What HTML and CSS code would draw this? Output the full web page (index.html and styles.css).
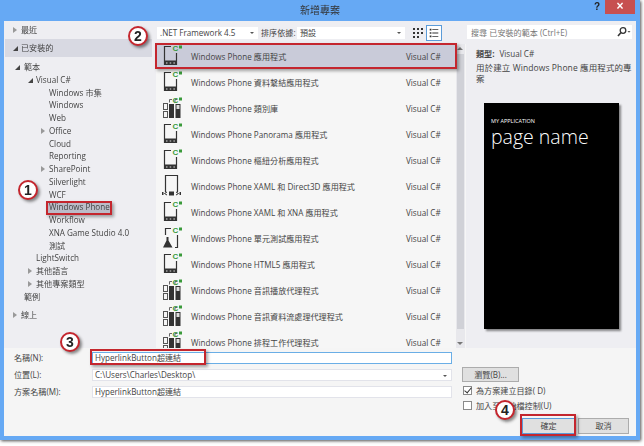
FILE: index.html
```html
<!DOCTYPE html>
<html lang="zh-Hant">
<head>
  <meta charset="UTF-8">
  <title>新增專案</title>
  <link rel="stylesheet" href="styles.css">
</head>
<body>
<svg class="defs" width="0" height="0">
  <symbol id="csharp" viewBox="0 0 22 24">
    <text x="10.500" y="7" class="cs">C</text>
    <rect x="17" y="1.500" width="3" height="3" fill="#3a9a3a"/>
  </symbol>
  <symbol id="phone" viewBox="0 0 22 24">
    <path d="M9 2.500H2.500V20.500H14.500V9" fill="none" stroke="#333" stroke-width="1.200"/>
    <rect x="2" y="16.500" width="13" height="4.500" fill="#333"/>
    <path d="M4 19h1.500M7.700 19h1.500M11.400 19h1.500" stroke="#ddd" stroke-width="1.200"/>
    <use href="#csharp"/>
  </symbol>
  <symbol id="lib" viewBox="0 0 22 24">
    <rect x="1.500" y="7.500" width="4" height="6" fill="none" stroke="#555"/>
    <rect x="1.500" y="15.500" width="4" height="6" fill="none" stroke="#555"/>
    <path d="M7.500 6.500V3.500H10M13 6.500V3.500H15" fill="none" stroke="#666"/>
    <rect x="7" y="8" width="5" height="14" fill="#333"/>
    <rect x="13.500" y="8" width="5" height="14" fill="#333"/>
    <rect x="14.500" y="9" width="3" height="4" fill="#ddd"/>
    <use href="#csharp"/>
  </symbol>
  <symbol id="d3d" viewBox="0 0 22 24">
    <path d="M3.500 18V1.500H15.500V18" fill="none" stroke="#333" stroke-width="1.200"/>
    <rect x="7" y="17.500" width="5" height="4" fill="#333"/>
    <path d="M5 18l-2.500 1.500L5 21M14 18l2.500 1.500L14 21" fill="none" stroke="#333"/>
    <rect x="0" y="18" width="1.500" height="3" fill="#333"/>
    <rect x="17.500" y="18" width="1.500" height="3" fill="#333"/>
  </symbol>
  <symbol id="test" viewBox="0 0 22 24">
    <path d="M9 2.500H3.500V9M15.500 9V21.500H13" fill="none" stroke="#333" stroke-width="1.200"/>
    <path d="M4.500 11h2v3.500l4 7H1l3.500-7z" fill="#333"/>
    <use href="#csharp"/>
  </symbol>
</svg>

<div class="window">
  <div class="titlebar">
    <span class="title">新增專案</span>
    <span class="help">?</span>
    <span class="close">×</span>
  </div>

  <div class="client">
    <div class="main">
      <div class="sidebar">
        <div class="head"><i class="arrow open-no"></i>最近</div>
        <div class="head selected"><i class="arrow filled"></i>已安裝的</div>
        <ul class="tree">
          <li class="lv1"><i class="arrow filled"></i>範本</li>
          <li class="lv2"><i class="arrow filled"></i>Visual C#</li>
          <li class="lv3">Windows 市集</li>
          <li class="lv3">Windows</li>
          <li class="lv3">Web</li>
          <li class="lv3"><i class="arrow open-no"></i>Office</li>
          <li class="lv3">Cloud</li>
          <li class="lv3">Reporting</li>
          <li class="lv3"><i class="arrow open-no"></i>SharePoint</li>
          <li class="lv3">Silverlight</li>
          <li class="lv3">WCF</li>
          <li class="lv3 picked">Windows Phone</li>
          <li class="lv3">Workflow</li>
          <li class="lv3">XNA Game Studio 4.0</li>
          <li class="lv3">測試</li>
          <li class="lv2">LightSwitch</li>
          <li class="lv2"><i class="arrow open-no"></i>其他語言</li>
          <li class="lv2"><i class="arrow open-no"></i>其他專案類型</li>
          <li class="lv1">範例</li>
        </ul>
        <div class="head online"><i class="arrow open-no"></i>線上</div>
      </div>

      <div class="center">
        <div class="toolbar">
          <div class="select fw">.NET Framework 4.5<b></b></div>
          <span class="sort-label">排序依據:</span>
          <div class="select sort">預設<b></b></div>
          <svg class="view" width="14" height="14" viewBox="0 0 14 14">
            <path d="M2 2h2v2H2zM6 2h2v2H6zM10 2h2v2h-2zM2 6h2v2H2zM6 6h2v2H6zM10 6h2v2h-2zM2 10h2v2H2zM6 10h2v2H6z" fill="#333"/>
          </svg>
          <svg class="view current" width="14" height="14" viewBox="0 0 14 14">
            <path d="M2 2h2v2H2zM5 2.500h7v1H5zM2 6h2v2H2zM5 6.500h7v1H5zM2 10h2v2H2zM5 10.500h7v1H5z" fill="#333"/>
          </svg>
        </div>
        <div class="list-wrap">
          <ul class="list">
            <li class="active"><svg class="icon"><use href="#phone"/></svg><span>Windows Phone 應用程式</span><em>Visual C#</em></li>
            <li><svg class="icon"><use href="#phone"/></svg><span>Windows Phone 資料繫結應用程式</span><em>Visual C#</em></li>
            <li><svg class="icon"><use href="#lib"/></svg><span>Windows Phone 類別庫</span><em>Visual C#</em></li>
            <li><svg class="icon"><use href="#phone"/></svg><span>Windows Phone Panorama 應用程式</span><em>Visual C#</em></li>
            <li><svg class="icon"><use href="#phone"/></svg><span>Windows Phone 樞紐分析應用程式</span><em>Visual C#</em></li>
            <li><svg class="icon"><use href="#d3d"/></svg><span>Windows Phone XAML 和 Direct3D 應用程式</span><em>Visual C#</em></li>
            <li><svg class="icon"><use href="#phone"/></svg><span>Windows Phone XAML 和 XNA 應用程式</span><em>Visual C#</em></li>
            <li><svg class="icon"><use href="#test"/></svg><span>Windows Phone 單元測試應用程式</span><em>Visual C#</em></li>
            <li><svg class="icon"><use href="#phone"/></svg><span>Windows Phone HTML5 應用程式</span><em>Visual C#</em></li>
            <li><svg class="icon"><use href="#lib"/></svg><span>Windows Phone 音訊播放代理程式</span><em>Visual C#</em></li>
            <li><svg class="icon"><use href="#lib"/></svg><span>Windows Phone 音訊資料流處理代理程式</span><em>Visual C#</em></li>
            <li><svg class="icon"><use href="#lib"/></svg><span>Windows Phone 排程工作代理程式</span><em>Visual C#</em></li>
          </ul>
          <div class="scrollbar">
            <i class="up"></i>
            <div class="thumb"></div>
            <i class="down"></i>
          </div>
        </div>
      </div>

      <div class="details">
        <div class="search">
          <span>搜尋 已安裝的範本 (Ctrl+E)</span>
          <svg width="14" height="12" viewBox="0 0 14 12">
            <circle cx="6" cy="4.500" r="2.800" fill="none" stroke="#333" stroke-width="1.300"/>
            <path d="M4 6.500L1 10" stroke="#333" stroke-width="1.600"/>
            <path d="M10.500 5h3l-1.500 1.800z" fill="#555"/>
          </svg>
        </div>
        <p class="type"><b>類型:</b>Visual C#</p>
        <p class="desc">用於建立 Windows Phone 應用程式的專<br>案</p>
        <div class="preview">
          <div class="app-name">MY APPLICATION</div>
          <div class="page-name">page name</div>
        </div>
      </div>
    </div>

    <div class="form">
      <div class="fields">
        <label>名稱(N):</label>
        <div class="input focus">HyperlinkButton超連結</div>
        <label>位置(L):</label>
        <div class="input">C:\Users\Charles\Desktop\<b></b></div>
        <label>方案名稱(M):</label>
        <div class="input">HyperlinkButton超連結</div>
      </div>
      <div class="side">
        <button class="browse">瀏覽(B)...</button>
        <div class="check"><i class="on"></i>為方案建立目錄( D)</div>
        <div class="check"><i></i>加入至原始檔控制(U)</div>
        <div class="actions">
          <button class="ok">確定</button>
          <button>取消</button>
        </div>
      </div>
    </div>
  </div>

  <div class="mark m-row"></div>
  <div class="mark m-tree"></div>
  <div class="mark m-name"></div>
  <div class="mark m-ok"></div>
  <div class="badge b1">1</div>
  <div class="badge b2">2</div>
  <div class="badge b3">3</div>
  <div class="badge b4">4</div>
</div>
</body>
</html>
```

FILE: styles.css
```css
*{margin:0;padding:0;box-sizing:border-box;}
html,body{width:644px;height:446px;overflow:hidden;background:#fff;}
body{font-family:"Open Sans","Noto Sans CJK TC",sans-serif;font-size:8.100px;color:#444;}
.defs{position:absolute;}
.cs{font:bold 8px "Liberation Sans",sans-serif;fill:#3a9a3a;}

.window{
  position:relative;
  width:640px;
  height:440px;
  background:#66a9f4;
  box-shadow:1px 1px 3px rgba(0,0,0,.7);
  padding:0 4px 4px;
  display:flex;
  flex-direction:column;
  filter:blur(.35px);
}
.titlebar{height:21px;position:relative;display:flex;justify-content:center;padding-top:4px;line-height:13px;}
.title{font-size:10px;color:#333;}
.help{position:absolute;right:36px;top:1px;font:bold 10px "Liberation Sans",sans-serif;color:#222;}
.close{
  position:absolute;
  right:1px;
  top:0;
  width:30px;
  height:14px;
  background:#c75050;
  color:#fff;
  font:bold 12px/13px "Liberation Sans",sans-serif;
  text-align:center;
}

.client{flex:1;background:#f5f5f5;display:flex;flex-direction:column;}
.main{height:327px;display:flex;background:#eeeef2;}

.sidebar{width:152px;padding-left:1px;}
.head{height:18px;line-height:18px;padding-left:16px;position:relative;}
.head.selected{background:#d8d9e2;width:147px;}
.head.online{margin-top:5px;height:14px;line-height:14px;}
.arrow{position:absolute;top:50%;margin-top:-3px;left:8px;width:0;height:0;}
.arrow.open-no{border-left:4px solid #999;border-top:3px solid transparent;border-bottom:3px solid transparent;}
.arrow.filled{border-right:5px solid #444;border-top:5px solid transparent;margin-top:-2px;}
.tree{list-style:none;margin-top:4px;}
.tree li{height:12.75px;line-height:12.75px;position:relative;white-space:nowrap;}
.lv1{padding-left:19px;}
.lv1 .arrow{left:10px;}
.lv2{padding-left:31px;}
.lv2 .arrow{left:23px;}
.lv3{padding-left:44px;}
.lv3 .arrow{left:36px;}
.tree li.picked{background:linear-gradient(#bbbcc8,#bbbcc8) 42px 0/64px 100% no-repeat;}

.center{width:310px;display:flex;flex-direction:column;background:#f6f6f6;}
.toolbar{height:23px;background:#eeeef2;display:flex;align-items:center;padding-left:1px;}
.select{height:12px;line-height:12px;background:#fff;padding-left:3px;position:relative;}
.select b,.input b{
  position:absolute;
  right:4px;
  top:5px;
  border-top:2px solid #555;
  border-left:2px solid transparent;
  border-right:2px solid transparent;
}
.fw{width:101px;}
.sort-label{margin:0 2px 0 3px;width:34px;white-space:nowrap;}
.sort{width:108px;}
.view{margin-left:6px;}
.view.current{margin-left:1px;width:16px;height:16px;padding:1px;border:1px solid #5b9bd8;background:#fff;}

.list-wrap{flex:1;display:flex;min-height:0;}
.list{list-style:none;flex:1;overflow:hidden;padding-left:1px;}
.list li{height:26px;display:flex;align-items:center;padding-left:5px;}
.list li.active{background:#c9cbd9;height:24px;margin-bottom:1px;}
.icon{width:22px;height:24px;flex:none;margin-right:7px;}
.list span{flex:1;white-space:nowrap;}
.list em{font-style:normal;width:50px;flex:none;}
.scrollbar{width:9px;background:#e8e8ec;display:flex;flex-direction:column;margin-right:1px;}
.scrollbar .up,.scrollbar .down{height:9px;position:relative;flex:none;}
.scrollbar .up::after,.scrollbar .down::after{content:"";position:absolute;left:1px;top:3px;border-left:3px solid transparent;border-right:3px solid transparent;}
.scrollbar .up::after{border-bottom:3px solid #777;}
.scrollbar .down::after{border-top:3px solid #777;}
.thumb{flex:1;background:#d0d1d7;margin:1px 1px 10px;}

.details{flex:1;padding:4px 4px 0 1px;}
.search{
  height:14px;
  background:#fff;
  display:flex;
  align-items:center;
  justify-content:space-between;
  padding:0 1px 0 4px;
  color:#777;
}
.type{margin:8px 0 0 9px;line-height:13px;}
.type b{font-weight:700;margin-right:5px;}
.desc{margin:3px 0 0 9px;white-space:nowrap;font-size:8.500px;letter-spacing:.1px;line-height:10.500px;}
.preview{
  width:135px;
  height:226px;
  margin:19px 0 0 17px;
  background:#000;
  color:#fff;
  padding:14px 7px;
  box-shadow:2px 2px 2px rgba(0,0,0,.45);
}
.app-name{font-size:5.500px;line-height:8px;}
.page-name{font-size:19.500px;font-weight:300;line-height:24px;}

.form{flex:1;display:flex;padding:3px 0 0;}
.fields{
  width:449px;
  display:grid;
  grid-template-columns:78px 360px;
  grid-auto-rows:12px;
  row-gap:5px;
  align-content:start;
  padding:1px 0 0 10px;
  line-height:12px;
}
.input{background:#fff;padding-left:2px;position:relative;border:1px solid #e2e3ea;line-height:10px;}
.input.focus{border-color:#6aaee6;}
.side{flex:1;padding:16px 0 0 9px;display:flex;flex-direction:column;}
button{
  font:inherit;
  color:inherit;
  background:#e0e0e0;
  border:1px solid #acacac;
  height:15px;
  line-height:12px;
}
.browse{width:57px;flex:none;}
.check{height:14px;margin-top:1px;display:flex;align-items:center;white-space:nowrap;}
.check i{width:9px;height:9px;background:#fff;border:1px solid #8a8a8a;margin:0 4px 0 1px;flex:none;position:relative;}
.check i.on::after{
  content:"";
  position:absolute;
  left:2px;
  top:-1px;
  width:3px;
  height:6px;
  border:solid #333;
  border-width:0 1.500px 1.500px 0;
  transform:rotate(40deg);
}
.actions{display:flex;gap:3px;margin:6px 0 0 60px;}
.actions button{width:51px;height:16px;flex:none;}
.actions .ok{border-color:#5b9bd8;width:53px;}

/* annotations on top of the dialog */
.mark{
  position:absolute;
  border:2px solid #c4262e;
  box-shadow:2px 2px 3px rgba(0,0,0,.35);
}
.m-row{left:155px;top:43px;width:302px;height:26px;}
.m-tree{left:46px;top:201px;width:66px;height:14px;}
.m-name{left:90px;top:349px;width:116px;height:16px;}
.m-ok{left:520px;top:414px;width:56px;height:22px;}
.badge{
  position:absolute;
  width:20px;
  height:20px;
  border-radius:50%;
  background:#fff;
  border:2px solid #c4262e;
  box-shadow:2px 2px 3px rgba(0,0,0,.45);
  font:bold 14px/16px "Liberation Sans",sans-serif;
  color:#222;
  text-align:center;
}
.b1{left:18px;top:180px;}
.b2{left:128px;top:26px;}
.b3{left:60px;top:332px;}
.b4{left:495px;top:400px;}
```
